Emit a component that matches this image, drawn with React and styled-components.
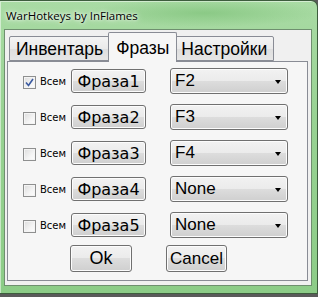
import React, { useState } from "react";
import styled, { createGlobalStyle } from "styled-components";

const Global = createGlobalStyle`
    html, body {
        margin: 0;
        padding: 0;
        background: #5a5a5a;
    }
    body {
        width: 318px;
        height: 297px;
        overflow: hidden;
    }
`

const Window = styled.div`
    width: 318px;
    height: 294px;
    box-sizing: border-box;
    border: 1px solid #3d5d3d;
    border-left: 0;
    border-radius: 0 7px 0 0;
    background: linear-gradient(180deg, #a9dba4 0%, #98d293 40%, #8ccc87 100%);
    box-shadow: inset 1px 1px 0 rgba(255,255,255,0.5);
    display: flex;
    flex-direction: column;
    padding: 0 5px 7px 4px;
`

const TitleBar = styled.div`
    height: 28px;
    display: flex;
    align-items: center;
    padding-left: 2px;
    font-family: "Open Sans", "Noto Sans", sans-serif;
    font-size: 11.5px;
    color: #000;
    text-shadow: 0 0 6px #fff, 0 0 3px #fff;
    background: radial-gradient(ellipse 120px 14px at 200px 12px, rgba(120,190,115,0.6), transparent);
`

const Client = styled.div`
    flex: 1;
    background: #f0f0f0;
    border: 1px solid #6f8f6f;
    box-sizing: border-box;
    padding: 3px 3px 4px 2px;
    display: flex;
    flex-direction: column;
`

const TabStrip = styled.div`
    display: flex;
    align-items: flex-end;
    height: 28px;
    padding-left: 2px;
    position: relative;
    z-index: 1;
`

const Tab = styled.div`
    box-sizing: border-box;
    height: ${p => (p.$active ? "30px" : "25px")};
    margin: ${p => (p.$active ? "0 -2px -1px -2px" : "0")};
    padding: ${p => (p.$active ? "2px 7px 0" : "2px 6px 0")};
    border: 1px solid #898c95;
    border-bottom: ${p => (p.$active ? "0" : "1px solid #898c95")};
    margin-left: ${p => (p.$first ? "0" : p.$active ? "-2px" : "-1px")};
    background: ${p => (p.$active
        ? "#f6f6f6"
        : "linear-gradient(180deg, #f4f4f4 0%, #eaeaea 50%, #dedede 51%, #e6e6e6 100%)")};
    border-radius: 2px 2px 0 0;
    font-family: "Liberation Sans", Arial, sans-serif;
    font-size: 17.5px;
    color: #000;
    display: flex;
    align-items: center;
    position: relative;
    z-index: ${p => (p.$active ? 2 : 1)};
`

const Panel = styled.div`
    flex: 1;
    background: #f6f6f6;
    border: 1px solid #898c95;
    box-sizing: border-box;
    padding: 6px 0 0 15px;
    display: flex;
    flex-direction: column;
    gap: 10px;
`

const Row = styled.div`
    display: flex;
    align-items: center;
    height: 26px;
`

const CheckWrap = styled.label`
    display: flex;
    align-items: center;
    gap: 4px;
    font-family: "DejaVu Sans", Verdana, sans-serif;
    font-size: 10px;
    color: #000;
    width: 48px;
    cursor: default;
`

const Box = styled.span`
    width: 13px;
    height: 13px;
    box-sizing: border-box;
    border: 1px solid #8e8f8f;
    background: linear-gradient(135deg, #dcdcdc 0%, #f4f4f4 60%, #fdfdfd 100%);
    box-shadow: inset 0 0 0 1px #f4f4f4;
    display: flex;
    align-items: center;
    justify-content: center;
    margin-top: 2px;
`

const Button = styled.button`
    box-sizing: border-box;
    width: ${p => p.$w}px;
    height: ${p => p.$h}px;
    padding: 0;
    border: 1px solid #707070;
    border-radius: 3px;
    background: linear-gradient(180deg, #f2f2f2 0%, #ebebeb 49%, #dddddd 50%, #cfcfcf 100%);
    box-shadow: inset 0 0 0 1px #fcfcfc;
    font-family: ${p => p.$serif ? '"DejaVu Sans", Verdana, sans-serif' : '"Liberation Sans", Arial, sans-serif'};
    font-size: ${p => p.$fs}px;
    color: #000;
    display: flex;
    align-items: center;
    justify-content: center;
`

const Combo = styled.div`
    box-sizing: border-box;
    width: 118px;
    height: 26px;
    margin-left: 24px;
    border: 1px solid #707070;
    border-radius: 3px;
    background: linear-gradient(180deg, #f2f2f2 0%, #ebebeb 49%, #dddddd 50%, #cfcfcf 100%);
    box-shadow: inset 0 0 0 1px #fcfcfc;
    display: flex;
    align-items: center;
    justify-content: space-between;
    padding: 0 6px 0 4px;
    font-family: "Liberation Sans", Arial, sans-serif;
    font-size: 17px;
    color: #000;
`

const Arrow = styled.span`
    width: 0;
    height: 0;
    border-left: 3.5px solid transparent;
    border-right: 3.5px solid transparent;
    border-top: 4px solid #000;
    margin-top: 2px;
`

const Footer = styled.div`
    display: flex;
    gap: 34px;
    padding-left: 47px;
    margin-top: -3px;
`

const Check = () => (
    <svg width="9" height="9" viewBox="0 0 9 9">
        <path d="M1 4.5 L3.5 7.5 L8 1" fill="none" stroke="#3a5aa0" strokeWidth="1.6" />
    </svg>
)

const rows = [
    { name: "Фраза1", key: "F2", all: true },
    { name: "Фраза2", key: "F3", all: false },
    { name: "Фраза3", key: "F4", all: false },
    { name: "Фраза4", key: "None", all: false },
    { name: "Фраза5", key: "None", all: false },
]

const App = () => {
    const [tab] = useState(1)
    const tabs = ["Инвентарь", "Фразы", "Настройки"]

    return (
        <>
            <Global />
            <Window>
                <TitleBar>WarHotkeys by InFlames</TitleBar>
                <Client>
                    <TabStrip>
                        {tabs.map((t, i) => (
                            <Tab key={t} $active={i === tab} $first={i === 0}>{t}</Tab>
                        ))}
                    </TabStrip>
                    <Panel>
                        {rows.map(r => (
                            <Row key={r.name}>
                                <CheckWrap>
                                    <Box>{r.all ? <Check /> : null}</Box>
                                    Всем
                                </CheckWrap>
                                <Button $w={75} $h={24} $fs={16} $serif>{r.name}</Button>
                                <Combo>
                                    {r.key}
                                    <Arrow />
                                </Combo>
                            </Row>
                        ))}
                        <Footer>
                            <Button $w={62} $h={27} $fs={18}>Ok</Button>
                            <Button $w={61} $h={27} $fs={17}>Cancel</Button>
                        </Footer>
                    </Panel>
                </Client>
            </Window>
        </>
    )
}

export default App
